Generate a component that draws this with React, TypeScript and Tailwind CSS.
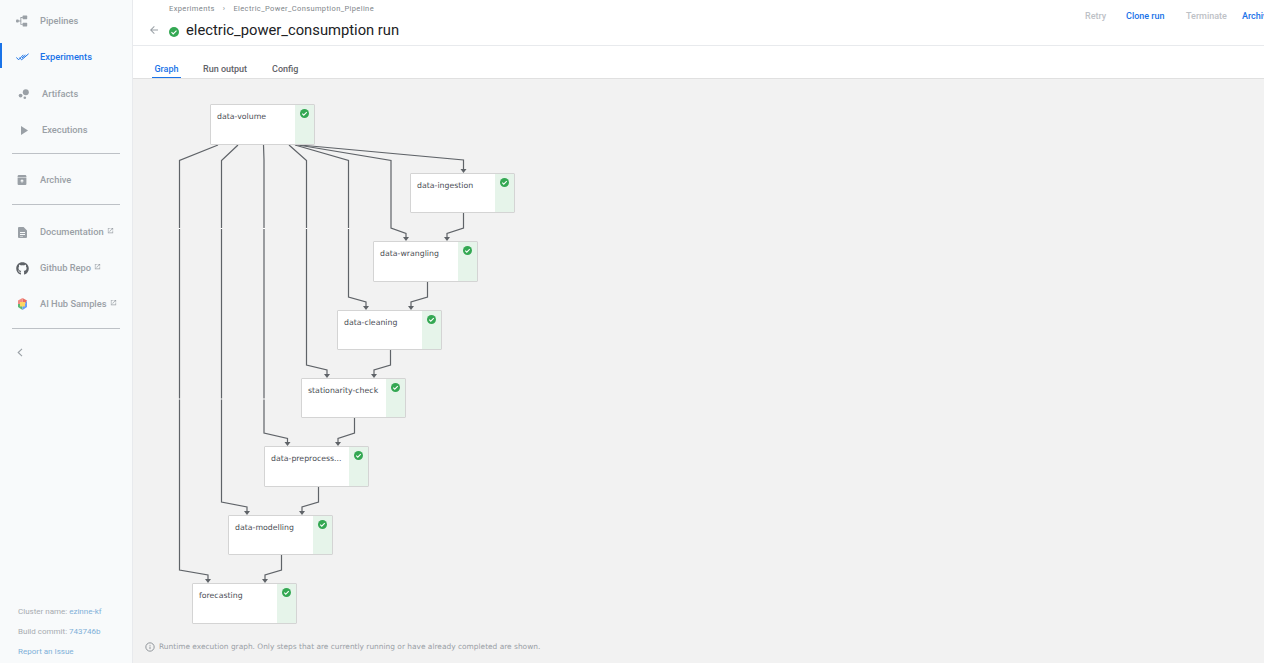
import React from 'react';
import { FaGithub } from 'react-icons/fa';

const ROBOTO = 'font-["Roboto",sans-serif]';

function ExternalIcon() {
  return (
    <svg width="7" height="7" viewBox="0 0 24 24" className="mb-[4px] ml-[3px] shrink-0" fill="#9aa0a6">
      <path d="M19 19H5V5h7V3H3v18h18v-9h-2v7zM14 3v2h3.6l-9.8 9.8 1.4 1.4L19 6.4V10h2V3h-7z" />
    </svg>
  );
}

function NavItem(props: { icon: React.ReactNode; label: string; active?: boolean; ext?: boolean; inset?: boolean }) {
  return (
    <div className={`relative flex h-[36px] items-center ${props.inset ? 'pl-[18px] pt-[2px]' : 'pl-[16px]'} ${props.active ? 'text-[#1a73e8]' : 'text-[#9aa0a6]'}`}>
      {props.active && <div className="absolute left-0 top-[4px] h-[25px] w-[1.5px] bg-[#1a73e8]" />}
      <div className="flex w-[12px] shrink-0 items-center justify-center">{props.icon}</div>
      <span className="ml-[12px] text-[9.3px] font-medium whitespace-nowrap">{props.label}</span>
      {props.ext && <ExternalIcon />}
    </div>
  );
}

function Sidebar() {
  return (
    <aside className={`flex w-[133px] shrink-0 flex-col border-r border-[#e8eaed] bg-[#f8fafb] ${ROBOTO}`}>
      <div className="pt-[3px]">
        <NavItem
          label="Pipelines"
          icon={
            <svg width="12" height="12" viewBox="0 0 12 12" fill="#9aa0a6" className="shrink-0">
              <rect x="0" y="4.6" width="2.8" height="2.8" rx="1" />
              <rect x="6.6" y="0.6" width="4.6" height="3.6" rx="0.6" />
              <rect x="6.6" y="7.8" width="4.6" height="3.6" rx="0.6" />
              <path d="M2.4 5.4h2V2h2.4v.9H5.3v2.5h.1v1H5.3v2.5h1.5v.9H4.4V6.4h-2z" />
            </svg>
          }
        />
        <NavItem
          active
          label="Experiments"
          icon={
            <svg width="13" height="8" viewBox="0 0 13 8" fill="none" stroke="#1a73e8" strokeWidth="1" className="shrink-0">
              <path d="M0.3 4.4 2.6 6.8 7.4 1.8" />
              <path d="M3.4 4.6 5.6 6.8 12.6 0.8" />
              <path d="M6 5 9.4 2" />
            </svg>
          }
        />
        <NavItem
          inset
          label="Artifacts"
          icon={
            <svg width="12" height="12" viewBox="0 0 12 12" fill="#9aa0a6" className="shrink-0">
              <circle cx="2.6" cy="7.6" r="1.9" />
              <circle cx="7.8" cy="4.2" r="3" />
              <circle cx="6.8" cy="9.8" r="1.3" />
            </svg>
          }
        />
        <NavItem
          inset
          label="Executions"
          icon={
            <svg width="7" height="9" viewBox="0 0 7 9" fill="#9aa0a6" className="shrink-0">
              <path d="M0 0l7 4.5L0 9z" />
            </svg>
          }
        />
      </div>
      <div className="mx-[12px] mt-[6px] h-px bg-[#bdc1c6]" />
      <div className="mt-[8px]">
        <NavItem
          label="Archive"
          icon={
            <svg width="10" height="10" viewBox="0 0 10 10" fill="#9aa0a6" className="shrink-0">
              <path d="M0.6 1 1.4 0h7.2l.8 1v1H.6z" />
              <path d="M.6 2.6h8.8v6.4a1 1 0 0 1-1 1h-6.8a1 1 0 0 1-1-1zM5 4.2 3 6.2h1.4v1.4h1.2V6.2H7z" fillRule="evenodd" />
            </svg>
          }
        />
      </div>
      <div className="mx-[12px] mt-[6px] h-px bg-[#bdc1c6]" />
      <div className="mt-[9px]">
        <NavItem
          ext
          label="Documentation"
          icon={
            <svg width="9" height="11" viewBox="0 0 9 11" fill="#9aa0a6" className="shrink-0">
              <path d="M1 0h4.6L9 3.4V10a1 1 0 0 1-1 1H1a1 1 0 0 1-1-1V1a1 1 0 0 1 1-1zM2 5v1h5V5zm0 2v1h5V7zm0 2v.6h3V9z" fillRule="evenodd" />
            </svg>
          }
        />
        <NavItem ext label="Github Repo" icon={<FaGithub size={13} color="#5f6368" className="shrink-0" />} />
        <NavItem
          ext
          label="AI Hub Samples"
          icon={
            <svg width="11" height="12" viewBox="0 0 11 12" className="shrink-0">
              <path d="M5.5 0 10 2.6 8 6 5.5 3.5z" fill="#ea6b5f" />
              <path d="M5.5 0 1 2.6v3.4L3 6 5.5 3.5z" fill="#f28b82" />
              <path d="M1 6v3l4.5 3V8.5L3 6z" fill="#5bb974" />
              <path d="M10 2.6V9l-4.5 3V8.5L8 6z" fill="#669df6" />
              <path d="M3 4h5v4.5H3z" fill="#fdd663" />
            </svg>
          }
        />
      </div>
      <div className="mx-[12px] mt-[6px] h-px bg-[#bdc1c6]" />
      <div className="mt-[19px] pl-[17px]">
        <svg width="6" height="9" viewBox="0 0 6 9" fill="none" stroke="#9aa0a6" strokeWidth="1.1">
          <path d="M5 .8 1.2 4.5 5 8.2" />
        </svg>
      </div>
      <div className="mt-auto flex flex-col gap-[11px] pb-[7px] pl-[18px] text-[8px] leading-[9px] text-[#a7abb0]">
        <div>
          Cluster name: <span className="text-[#7fb0d8]">ezinne-kf</span>
        </div>
        <div>
          Build commit: <span className="text-[#7fb0d8]">743746b</span>
        </div>
        <div className="text-[#7fb0d8]">Report an Issue</div>
      </div>
    </aside>
  );
}

function Header() {
  return (
    <header className={`flex h-[46px] shrink-0 overflow-hidden border-b border-[#e8eaed] bg-white ${ROBOTO}`}>
      <div className="w-[952px] shrink-0 pl-[15px]">
        <div className="flex h-[17px] items-center pl-[21px] text-[7.5px] tracking-[0.38px] text-[#80868b]">
          <span>Experiments</span>
          <span className="mx-[8px]">›</span>
          <span>Electric_Power_Consumption_Pipeline</span>
        </div>
        <div className="flex h-[26px] items-center">
          <svg width="12" height="12" viewBox="0 0 24 24" fill="#9aa0a6">
            <path d="M20 11H7.83l5.59-5.59L12 4l-8 8 8 8 1.41-1.41L7.83 13H20v-2z" />
          </svg>
          <svg width="10" height="10" viewBox="0 0 24 24" className="ml-[9px] mt-[3px]">
            <circle cx="12" cy="12" r="12" fill="#34a853" />
            <path d="M6 12.5l4 4 8-8" fill="none" stroke="#fff" strokeWidth="2.6" />
          </svg>
          <h1 className="ml-[7px] mt-[1px] text-[14.75px] font-normal whitespace-nowrap text-[#202124]">electric_power_consumption run</h1>
        </div>
      </div>
      <div className="flex h-[33px] shrink-0 items-center whitespace-nowrap text-[9px] font-medium">
        <span className="w-[41px] text-[#bdc1c6]">Retry</span>
        <span className="w-[60px] text-[#1a73e8]">Clone run</span>
        <span className="w-[56px] text-[#bdc1c6]">Terminate</span>
        <span className="text-[#1a73e8]">Archive</span>
      </div>
    </header>
  );
}

function Tabs() {
  return (
    <div className={`flex h-[33px] shrink-0 items-end border-b border-[#e0e0e0] bg-white pl-[19px] text-[9px] leading-[17px] font-medium text-[#5f6368] ${ROBOTO}`}>
      <div className="h-[17px] w-[29px] border-b-[1.5px] border-[#1a73e8] text-center text-[#1a73e8]">Graph</div>
      <div className="ml-[22px] h-[17px]">Run output</div>
      <div className="ml-[25px] h-[17px]">Config</div>
    </div>
  );
}

type Step = { label: string; x: number; y: number; h?: number };

const STEPS: Step[] = [
  { label: 'data-volume', x: 210, y: 104, h: 41 },
  { label: 'data-ingestion', x: 410, y: 173, h: 40 },
  { label: 'data-wrangling', x: 373, y: 241, h: 41 },
  { label: 'data-cleaning', x: 337, y: 310, h: 40 },
  { label: 'stationarity-check', x: 301, y: 378, h: 40 },
  { label: 'data-preprocess...', x: 264, y: 446, h: 41 },
  { label: 'data-modelling', x: 228, y: 515, h: 40 },
  { label: 'forecasting', x: 192, y: 583, h: 41 },
];

// page coordinates, last point is the arrow tip
const EDGES: number[][][] = [
  [[218, 145], [179.5, 160.5], [179.5, 570], [208, 575], [208, 580]],
  [[238, 145], [221.5, 160.5], [221.5, 502], [247, 507], [247, 512]],
  [[263.5, 145], [264, 160], [264, 433], [287.5, 438.5], [287.5, 443]],
  [[289, 145], [306.5, 160.5], [306.5, 365], [327, 370], [327, 375]],
  [[295, 145], [348.5, 160.5], [348.5, 297], [366, 302], [366, 307]],
  [[298, 145], [391, 160.5], [391, 228], [406, 233.5], [406, 238]],
  [[300, 145], [463.5, 160], [463.5, 170]],
  [[463.5, 213], [463.5, 228], [447, 233.5], [447, 238]],
  [[427.5, 282], [427.5, 297], [411, 302], [411, 307]],
  [[390.5, 350], [390.5, 365], [374, 370], [374, 375]],
  [[354.5, 418], [354.5, 433], [338, 438.5], [338, 443]],
  [[318.5, 487], [318.5, 502], [302, 507], [302, 512]],
  [[281.5, 555], [281.5, 570], [265, 575], [265, 580]],
];

const GAP_X = [179.5, 221.5, 264, 306.5, 348.5];

// the graph area starts at 133,79
function EdgeLayer() {
  return (
    <svg width="500" height="560" viewBox="133 79 500 560" className="absolute left-0 top-0">
      {EDGES.map((pts, i) => {
        const tip = pts[pts.length - 1];
        return (
          <g key={i}>
            <polyline points={pts.map(p => p.join(',')).join(' ')} fill="none" stroke="#5f6368" strokeWidth="1.2" />
            <path d={`M${tip[0] - 3} ${tip[1] - 1}h6l-3 4z`} fill="#5f6368" />
          </g>
        );
      })}
      {GAP_X.map(x => (
        <rect key={x} x={x - 1} y={228} width={2} height={1} fill="#fff" />
      ))}
      {GAP_X.slice(0, 3).map(x => (
        <rect key={x} x={x - 1} y={398.5} width={2} height={1} fill="#fff" />
      ))}
    </svg>
  );
}

function StepNode({ step }: { step: Step }) {
  return (
    <div
      className="absolute flex w-[105px] rounded-[1px] border border-[#d4d4d4] bg-white"
      style={{ left: step.x - 133, top: step.y - 79, height: step.h }}
    >
      <div className="flex-1 pl-[6px] pt-[7px] font-['DejaVu_Sans',sans-serif] text-[7.8px] leading-[10px] whitespace-nowrap text-[#4a4e55]">
        {step.label}
      </div>
      <div className="flex w-[19px] justify-center bg-[#e6f4ea] pt-[4px]">
        <svg width="9" height="9" viewBox="0 0 24 24">
          <circle cx="12" cy="12" r="12" fill="#34a853" />
          <path d="M6 12.5l4 4 8-8" fill="none" stroke="#fff" strokeWidth="2.8" />
        </svg>
      </div>
    </div>
  );
}

function Graph() {
  return (
    <div className="relative flex-1 overflow-hidden bg-[#f2f2f2]">
      <EdgeLayer />
      {STEPS.map(s => (
        <StepNode key={s.label} step={s} />
      ))}
      <div className="absolute bottom-[11px] left-[12px] flex items-center font-['DejaVu_Sans',sans-serif] text-[7.43px] leading-[10px] whitespace-nowrap text-[#9aa0a6]">
        <svg width="10" height="10" viewBox="0 0 24 24" fill="none" stroke="#80868b" strokeWidth="2" className="mr-[4px]">
          <circle cx="12" cy="12" r="10" />
          <path d="M12 11v6M12 7v2" />
        </svg>
        Runtime execution graph. Only steps that are currently running or have already completed are shown.
      </div>
    </div>
  );
}

export default function App() {
  return (
    <div className="flex h-[663px] w-[1264px] overflow-hidden bg-white">
      <Sidebar />
      <main className="flex min-w-0 flex-1 flex-col">
        <Header />
        <Tabs />
        <Graph />
      </main>
    </div>
  );
}
